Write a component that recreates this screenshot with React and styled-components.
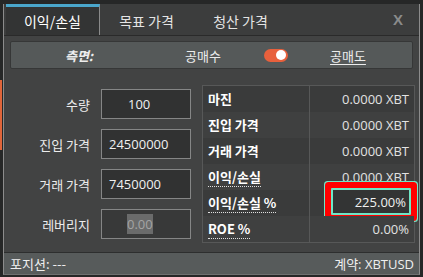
import React from 'react';
import styled, { createGlobalStyle } from 'styled-components';

const GlobalStyle = createGlobalStyle`
  html, body { margin: 0; padding: 0; background: #262727; }
  body {
    width: 423px; height: 277px; overflow: hidden;
    font-family: "Noto Sans CJK KR", "Open Sans", sans-serif;
    background:
      linear-gradient(#e0653a, #e0653a) 0 80px / 2px 70px no-repeat,
      #262727;
  }
`;

const Page = styled.div`
  padding: 4px 0 0 3px;
`;

const Window = styled.div`
  width: 415px;
  border-left: 1px solid #8c8c8c;
  border-right: 1px solid #8c8c8c;
  border-bottom: 1px solid #6f7070;
  background: #424343;
  display: flex;
  flex-direction: column;
`;

const TabBar = styled.div`
  height: 31px;
  display: flex;
  align-items: stretch;
  padding-left: 2px;
  background: #3c3d3d;
  border-bottom: 1px solid #2a2a2a;
`;

const Tab = styled.div`
  box-sizing: border-box;
  width: 94px;
  display: flex;
  align-items: center;
  justify-content: center;
  font-size: 14px;
  color: ${p => (p.$active ? '#ffffff' : '#e4e4e4')};
  background: ${p => (p.$active ? '#333434' : 'transparent')};
  border-top: 3px solid ${p => (p.$active ? '#4aa6cb' : 'transparent')};
  border-right: 1px solid ${p => (p.$active ? '#8a8a8a' : 'transparent')};
`;

const Close = styled.div`
  margin-left: auto;
  padding-right: 16px;
  display: flex;
  align-items: center;
  font-family: "Liberation Sans", sans-serif;
  font-weight: bold;
  font-size: 15px;
  color: #8a8b8b;
`;

const SideBox = styled.div`
  margin: 5px 6px 0 6px;
  height: 26px;
  border: 1px solid #363737;
  border-radius: 2px;
  background: #555959;
  display: flex;
  align-items: center;
`;

const SideCell = styled.div`
  width: ${p => p.$w}px;
  display: flex;
  justify-content: center;
  align-items: center;
  font-size: 13px;
  color: #ececec;
`;

const SideTitle = styled.span`
  font-weight: bold;
  font-style: italic;
`;

const SideLink = styled.span`
  text-decoration: underline;
  text-underline-offset: 3px;
`;

const Toggle = styled.div`
  width: 24px;
  height: 13px;
  border-radius: 7px;
  background: #e8603c;
  display: flex;
  align-items: center;
  justify-content: flex-end;
  padding-right: 2px;
  box-sizing: border-box;
`;

const Knob = styled.div`
  width: 10px;
  height: 10px;
  border-radius: 50%;
  background: #ffffff;
`;

const Body = styled.div`
  display: flex;
  padding: 16px 0 9px 6px;
`;

const Form = styled.div`
  width: 186px;
  padding-top: 4px;
  display: flex;
  flex-direction: column;
  gap: 10px;
`;

const FormRow = styled.div`
  display: flex;
  align-items: center;
  height: 30px;
  gap: 11px;
`;

const Label = styled.div`
  width: 80px;
  text-align: right;
  font-size: 13px;
  color: #ececec;
`;

const Input = styled.div`
  box-sizing: border-box;
  width: 90px;
  height: 30px;
  border: 1px solid #858686;
  background: ${p => (p.$disabled ? '#383939' : '#313232')};
  display: flex;
  align-items: center;
  padding-left: ${p => p.$indent}px;
  font-family: "Open Sans", "Noto Sans", sans-serif;
  font-size: 13px;
  color: #f0f0f0;
`;

const Selected = styled.span`
  background: #6a6b6b;
  color: #a4a4a4;
  line-height: 20px;
`;

const Table = styled.div`
  margin-left: 6px;
  width: 211px;
  border: 1px solid #575858;
  display: flex;
  flex-direction: column;
`;

const TRow = styled.div`
  height: 26px;
  display: grid;
  grid-template-columns: 107px 1fr;
  background: ${p => (p.$alt ? '#3f4040' : '#3a3b3b')};
`;

const TLabel = styled.div`
  display: flex;
  align-items: center;
  padding-left: 5px;
  border-right: 1px solid #575858;
  font-size: 13px;
  font-weight: bold;
  color: #ffffff;
`;

const Dotted = styled.span`
  border-bottom: ${p => (p.$dotted ? '1px dotted #e0e0e0' : 'none')};
  line-height: 18px;
`;

const TValue = styled.div`
  display: flex;
  align-items: center;
  justify-content: flex-end;
  padding-right: 5px;
  font-family: "Open Sans", "Noto Sans", sans-serif;
  font-size: 13px;
  color: #e2e2e2;
`;

const Highlight = styled.div`
  box-sizing: border-box;
  width: 80px;
  height: 27px;
  margin-right: -2px;
  margin-top: -3px;
  border: 2px solid #6fe6c6;
  background: #333434;
  display: flex;
  align-items: center;
  justify-content: flex-end;
  padding-right: 3px;
  color: #f0f0f0;
  box-shadow: 0 0 0 6px #ff0000, 0 0 0 7px #6fe6c6;
  border-radius: 1px;
`;

const Status = styled.div`
  height: 21px;
  border-top: 1px solid #2d2e2e;
  background: #575b5b;
  display: flex;
  align-items: center;
  justify-content: space-between;
  padding: 0 5px 0 6px;
  font-size: 13px;
  color: #efefef;
`;

const StatusValue = styled.span`
  font-family: "Open Sans", "Noto Sans CJK KR", sans-serif;
`;

const rows = [
  { label: '마진', value: '0.0000 XBT' },
  { label: '진입 가격', value: '0.0000 XBT' },
  { label: '거래 가격', value: '0.0000 XBT' },
  { label: '이익/손실', value: '0.0000 XBT', dotted: true },
  { label: '이익/손실 %', value: '225.00%', dotted: true, highlight: true },
  { label: 'ROE %', value: '0.00%', dotted: true },
];

export default function App() {
  return (
    <>
      <GlobalStyle />
      <Page>
        <Window>
          <TabBar>
            <Tab $active>이익/손실</Tab>
            <Tab>목표 가격</Tab>
            <Tab>청산 가격</Tab>
            <Close>X</Close>
          </TabBar>
          <SideBox>
            <SideCell $w={136}><SideTitle>측면:</SideTitle></SideCell>
            <SideCell $w={112}>공매수</SideCell>
            <SideCell $w={34}><Toggle><Knob /></Toggle></SideCell>
            <SideCell $w={110}><SideLink>공매도</SideLink></SideCell>
          </SideBox>
          <Body>
            <Form>
              <FormRow>
                <Label>수량</Label>
                <Input $indent={26}>100</Input>
              </FormRow>
              <FormRow>
                <Label>진입 가격</Label>
                <Input $indent={7}>24500000</Input>
              </FormRow>
              <FormRow>
                <Label>거래 가격</Label>
                <Input $indent={7}>7450000</Input>
              </FormRow>
              <FormRow>
                <Label>레버리지</Label>
                <Input $indent={25} $disabled><Selected>0.00</Selected></Input>
              </FormRow>
            </Form>
            <Table>
              {rows.map((r, i) => (
                <TRow key={r.label} $alt={i % 2 === 1}>
                  <TLabel><Dotted $dotted={r.dotted}>{r.label}</Dotted></TLabel>
                  <TValue>
                    {r.highlight ? <Highlight>{r.value}</Highlight> : r.value}
                  </TValue>
                </TRow>
              ))}
            </Table>
          </Body>
          <Status>
            <span>포지션: ---</span>
            <StatusValue>계약: XBTUSD</StatusValue>
          </Status>
        </Window>
      </Page>
    </>
  );
}
